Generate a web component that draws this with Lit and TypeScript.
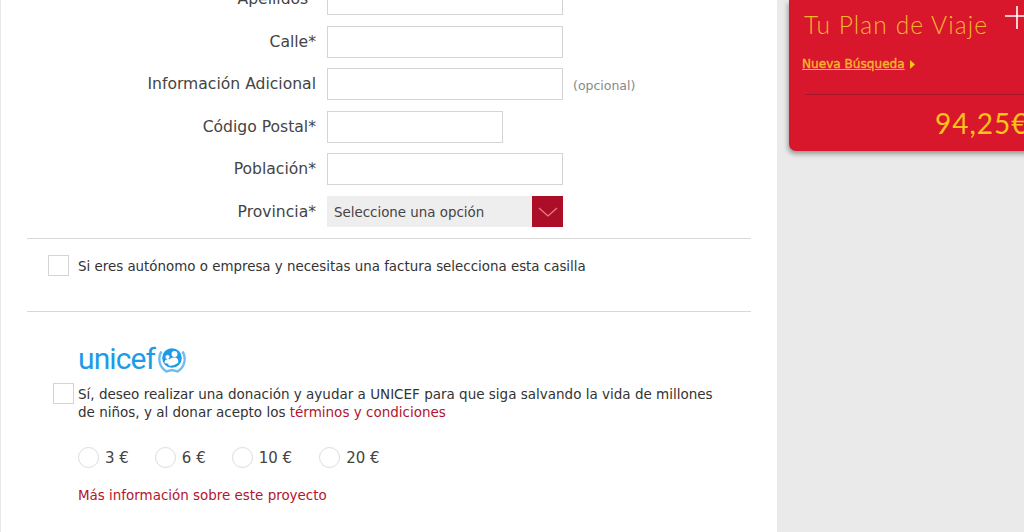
import { LitElement, html, css, svg } from "lit";
import { customElement } from "lit/decorators.js";

const rows = [
  { label: "Apellidos*", cls: "w" },
  { label: "Calle*", cls: "w" },
  { label: "Información Adicional", cls: "w", opt: true },
  { label: "Código Postal*", cls: "n" },
  { label: "Población*", cls: "w" },
];

const amounts = [
  { v: "3 €", gap: 26 },
  { v: "6 €", gap: 26 },
  { v: "10 €", gap: 27 },
  { v: "20 €", gap: 0 },
];

@customElement("app-root")
export class AppRoot extends LitElement {
  static styles = css`
    :host { display: block; width: 1024px; height: 532px; overflow: hidden; background: #eaeaea; font-family: "DejaVu Sans", Verdana, sans-serif; color: #333; }
    .page { display: flex; height: 532px; overflow: hidden; }
    .main { width: 776px; margin-left: 1px; background: #fff; flex: none; height: 532px; overflow: hidden; }
    .form { margin-top: -17px; }
    .row { display: flex; align-items: center; height: 32px; margin-bottom: 10.5px; }
    .label { width: 315px; text-align: right; font-size: 15.6px; color: #444; flex: none; margin-right: 11px; white-space: nowrap; }
    .input { height: 32px; box-sizing: border-box; border: 1px solid #d4d4d4; background: #fff; }
    .w { width: 236px; }
    .n { width: 176px; }
    .opt { margin: 2px 0 0 10px; font-size: 12.5px; color: #888; }
    .select { width: 236px; height: 31px; background: #eee; display: flex; align-items: center; justify-content: space-between; font-size: 13.4px; color: #444; padding-left: 7px; box-sizing: border-box; }
    .select span, .fact span { margin-top: 2px; }
    .arrow { width: 31px; height: 31px; background: #ac0e28; display: flex; align-items: center; justify-content: center; }
    .sep { height: 1px; background: #d8d8d8; margin-left: 26px; width: 724px; }
    .check { width: 21px; height: 21px; box-sizing: border-box; border: 1px solid #d4d4d4; flex: none; background: #fff; }
    .fact { display: flex; align-items: center; padding-left: 47px; gap: 9px; font-size: 13.4px; color: #333; height: 21px; margin-top: 16px; margin-bottom: 35px; }
    .unicef { display: flex; align-items: center; margin: 32px 0 0 77px; height: 30px; gap: 2px; }
    .logo { font-family: Roboto, "Open Sans", sans-serif; font-weight: 400; font-size: 30px; letter-spacing: -.9px; color: #1e9be8; line-height: 30px; }
    .don { display: flex; margin: 11px 0 0 52px; gap: 4px; font-size: 13.5px; line-height: 18px; color: #333; width: 670px; }
    .don .check { margin-top: -2px; }
    .don a, .more { color: #b2152e; }
    .radios { display: flex; margin: 26px 0 0 77px; align-items: center; font-size: 15px; color: #444; height: 21px; }
    .radio { width: 21px; height: 21px; box-sizing: border-box; border: 1px solid #dcdcdc; border-radius: 50%; margin-right: 6px; flex: none; }
    .rg { display: flex; align-items: center; }
    .more { margin: 19px 0 0 77px; font-size: 13.45px; line-height: 18px; }
    .side { margin-left: 12px; width: 300px; height: 151px; flex: none; box-sizing: border-box; background: #d8172d; border-radius: 0 0 0 7px; box-shadow: -1px 3px 5px rgba(0,0,0,.35); padding: 9px 0 0 15px; color: #f6b42c; position: relative; }
    .title { font-family: Lato, "Open Sans", sans-serif; font-weight: 300; font-size: 24.5px; letter-spacing: 1.1px; line-height: 32px; }
    .plus { position: absolute; left: 216px; top: 5px; }
    .link { display: flex; align-items: center; gap: 5px; margin: 14px 0 0 -2px; font-size: 12.1px; font-weight: 400; -webkit-text-stroke: .4px #f6b42c; line-height: 18px; white-space: nowrap; }
    .link span { text-decoration: underline; }
    .line { height: 1px; background: #a8162b; margin: 21px 0 0 1px; }
    .price { font-family: Lato, "Open Sans", sans-serif; font-weight: 400; font-size: 28px; color: #fbc21a; line-height: 34px; margin: 11px 0 0 131px; white-space: nowrap; letter-spacing: 1px; }
  `;

  private emblem() {
    return svg`<svg width="30" height="28" viewBox="0 0 30 28">
      <path d="M4.500 6.500C.500 13 2 22 9.500 26.500L15 25l5.500 1.500C28 22 29.500 13 25.500 6.500" fill="none" stroke="#6fbdf0" stroke-width="2.400"/>
      <circle cx="15" cy="13" r="9.800" fill="#1e9be8"/>
      <circle cx="17.500" cy="9" r="3" fill="#fff"/>
      <path d="M11.500 20.500c-1-4.500 1-7.500 5-8s5.500 2.500 4.500 5.500c-3 2-6 3-9.500 2.500z" fill="#fff"/>
      <circle cx="10.500" cy="12" r="2.100" fill="#fff"/>
      <path d="M7.500 18c0-3 2-4 4-4s2 3 1 5z" fill="#fff"/>
    </svg>`;
  }

  render() {
    return html`<div class="page">
      <div class="main">
        <div class="form">
          ${rows.map(r => html`<div class="row">
            <div class="label">${r.label}</div>
            <div class="input ${r.cls}"></div>
            ${r.opt ? html`<div class="opt">(opcional)</div>` : ""}
          </div>`)}
          <div class="row">
            <div class="label">Provincia*</div>
            <div class="select"><span>Seleccione una opción</span>
              <div class="arrow"><svg width="20" height="10" viewBox="0 0 20 10"><path d="M1 1l9 8 9-8" fill="none" stroke="#e8808f" stroke-width="1.2"/></svg></div>
            </div>
          </div>
        </div>
        <div class="sep"></div>
        <div class="fact"><div class="check"></div><span>Si eres autónomo o empresa y necesitas una factura selecciona esta casilla</span></div>
        <div class="sep"></div>
        <div class="unicef"><span class="logo">unicef</span>${this.emblem()}</div>
        <div class="don"><div class="check"></div><div>Sí, deseo realizar una donación y ayudar a UNICEF para que siga salvando la vida de millones de niños, y al donar acepto los <a>términos y condiciones</a></div></div>
        <div class="radios">
          ${amounts.map(a => html`<div class="rg" style="margin-right:${a.gap}px"><div class="radio"></div>${a.v}</div>`)}
        </div>
        <div class="more">Más información sobre este proyecto</div>
      </div>
      <div class="side">
        <div class="title">Tu Plan de Viaje</div>
        <svg class="plus" width="24" height="24" viewBox="0 0 24 24"><path d="M0 11h24M12 1v23" stroke="#fff" stroke-width="1.6" fill="none"/></svg>
        <div class="link"><span>Nueva Búsqueda</span><svg width="5" height="9" viewBox="0 0 5 9"><path d="M0 0l5 4.5L0 9z" fill="#fbc21a"/></svg></div>
        <div class="line"></div>
        <div class="price">94,25€</div>
      </div>
    </div>`;
  }
}
